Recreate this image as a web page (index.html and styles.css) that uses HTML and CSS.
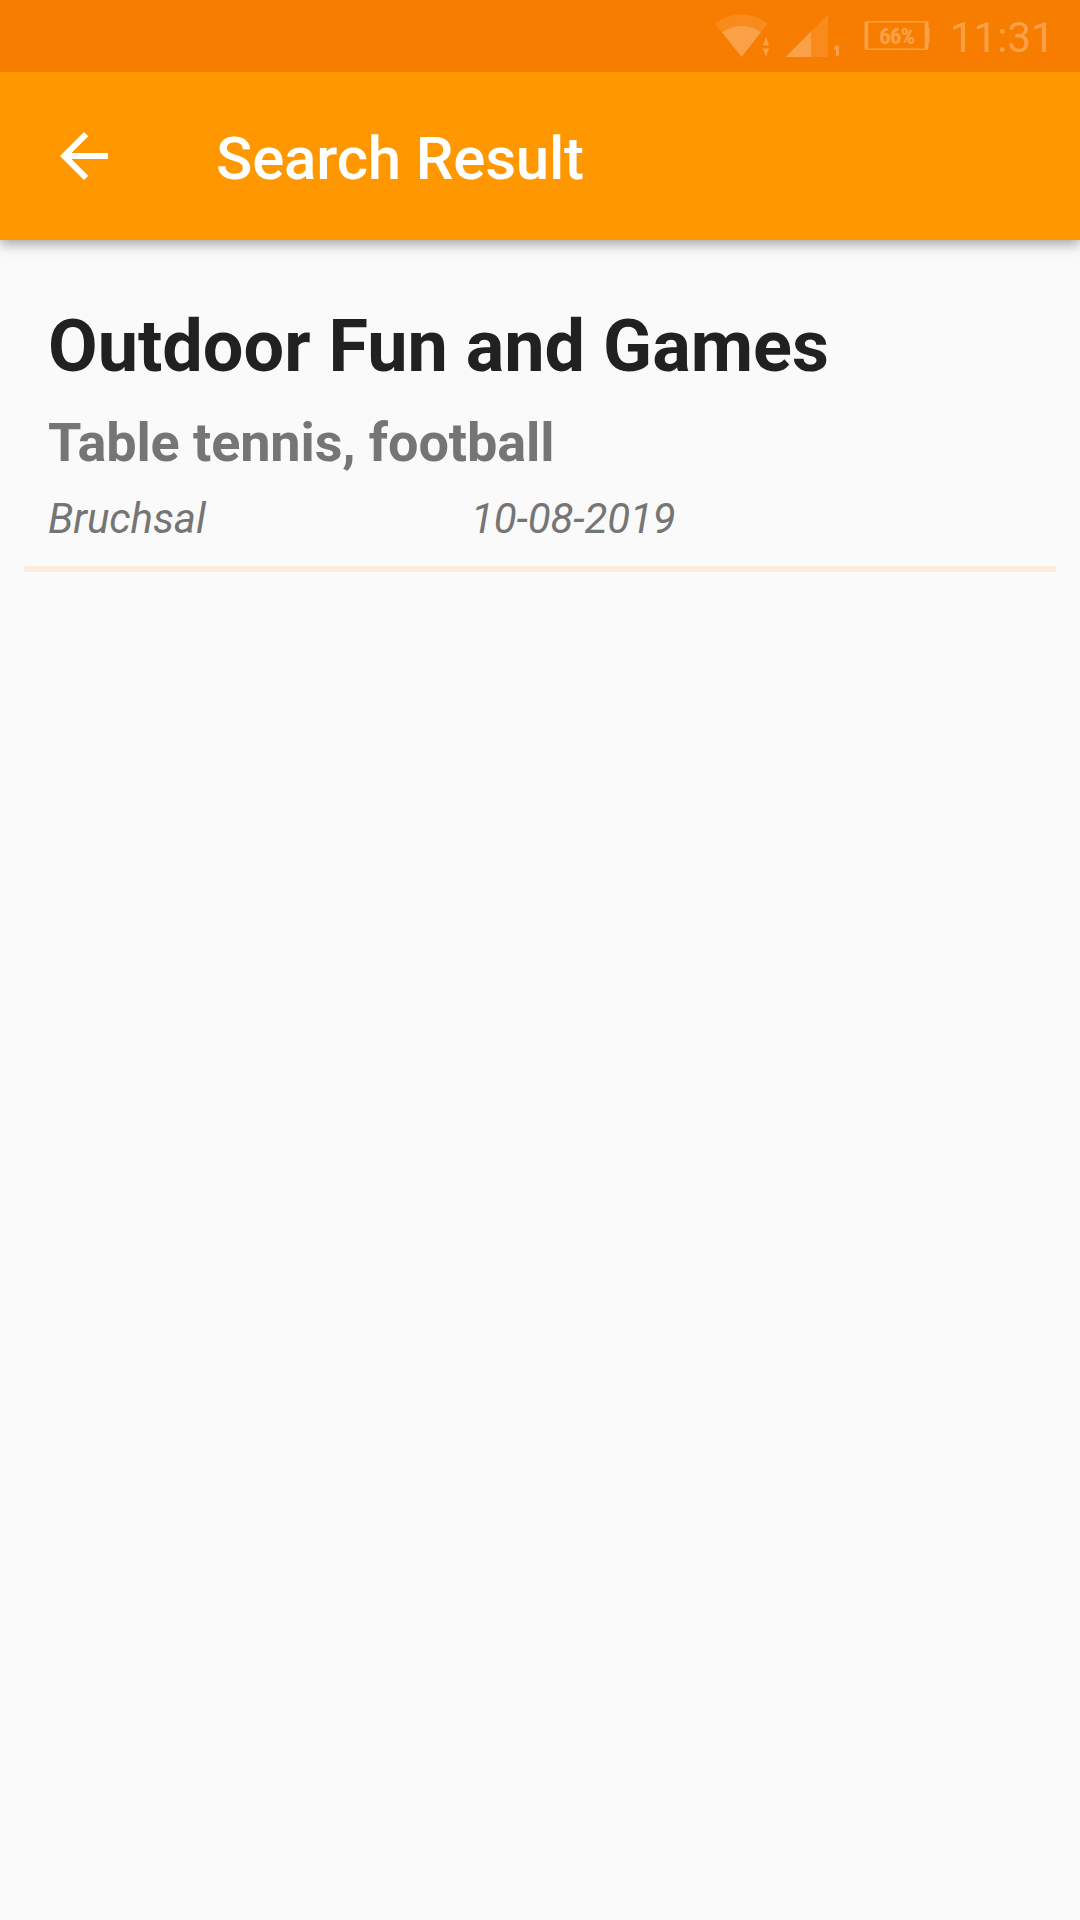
FILE: index.html
```html
<!DOCTYPE html>
<html lang="en">
<head>
  <meta charset="utf-8">
  <title>Search Result</title>
  <link rel="stylesheet" href="styles.css">
</head>
<body>
  <div class="status-bar">
    <svg class="status-icon" width="56" height="72" viewBox="714 0 56 72" aria-hidden="true">
      <path class="faint" d="M715 23.5Q727 14.5 741.5 14.5T768 23.5L761 32.2Q752 25.7 741.5 25.7T722 32.2Z"/>
      <path class="solid" d="M722 32.2Q731 25.7 741.5 25.7T761 32.2L741.5 57Z"/>
      <path class="solid" d="M766 37l3.2 8.5h-6.4zM762.8 48.5h6.4L766 56.5z"/>
    </svg>
    <svg class="status-icon" width="56" height="72" viewBox="785 0 56 72" aria-hidden="true">
      <path class="faint" d="M811 31.5L828 14.5V57H811z"/>
      <path class="solid" d="M785.5 57L811 31.5V57z"/>
      <path class="solid" d="M836 45.5h3V56h-3.2v-6.5H834v-2.7z"/>
    </svg>
    <svg class="status-icon" width="66" height="72" viewBox="863.5 0 66 72" aria-hidden="true">
      <path class="solid" fill-rule="evenodd" d="M866 21H926Q928 21 928 23V28H929V43H928V48Q928 50 926 50H866Q864 50 864 48V23Q864 21 866 21ZM867.7 22.5V48.5H924.3V22.5Z"/>
      <text class="battery-level" x="879" y="44" textLength="35.5" lengthAdjust="spacingAndGlyphs">66%</text>
    </svg>
    <span class="clock">11:31</span>
  </div>

  <header class="toolbar">
    <svg class="back" width="72" height="72" viewBox="0 0 24 24" aria-label="Back">
      <path d="M20 11H7.83l5.59-5.59L12 4l-8 8 8 8 1.41-1.41L7.83 13H20v-2z"/>
    </svg>
    <h1 class="toolbar-title">Search Result</h1>
  </header>

  <main class="results">
    <article class="result">
      <h2 class="result-title">Outdoor Fun and Games</h2>
      <p class="result-description">Table tennis, football</p>
      <div class="result-meta">
        <span>Bruchsal</span>
        <span>10-08-2019</span>
      </div>
    </article>
  </main>
</body>
</html>
```
FILE: styles.css
```css
* {
  box-sizing: border-box;
  margin: 0;
  padding: 0;
}

body {
  min-height: 1920px;
  background: #fafafa;
  font-family: Roboto, sans-serif;
}

.status-bar {
  position: relative;
  z-index: 1;
  display: flex;
  align-items: center;
  height: 72px;
  padding-left: 714px;
  background: #f77d00;
  color: #faa147;
}

.status-icon {
  flex: none;
  margin-right: 15px;
}

.status-icon + .status-icon + .status-icon {
  margin-left: 8px;
  margin-right: 20px;
}

.faint {
  fill: #f88b1b;
}

.solid {
  fill: #faa147;
}

.battery-level {
  fill: #faa147;
  stroke: #faa147;
  stroke-width: 0.6px;
  font-size: 22px;
  font-weight: 700;
}

.clock {
  padding-top: 4px;
  font-size: 42px;
  line-height: 50px;
}

.toolbar {
  display: flex;
  align-items: center;
  height: 168px;
  padding-left: 48px;
  background: #ff9800;
  box-shadow: 0 4px 12px rgba(0, 0, 0, 0.36);
}

.back {
  fill: #fff;
}

.toolbar-title {
  margin-left: 96px;
  padding-top: 6px;
  color: #fff;
  font-size: 60px;
  font-weight: 500;
  letter-spacing: -0.2px;
  line-height: 70px;
}

.results {
  padding: 0 24px;
}

.result {
  height: 332px;
  padding: 65px 24px 0;
  border-bottom: 6px solid #fcecdc;
}

.result-title {
  color: #212121;
  font-size: 72px;
  font-weight: 700;
  line-height: 84px;
}

.result-description {
  margin-top: 22px;
  color: #757575;
  font-size: 54px;
  font-weight: 700;
  letter-spacing: -0.11px;
  line-height: 64px;
}

.result-meta {
  display: grid;
  grid-template-columns: 423px 1fr;
  margin-top: 19px;
  color: #757575;
  font-size: 42px;
  font-style: italic;
  letter-spacing: -0.1px;
  line-height: 49px;
}
```
